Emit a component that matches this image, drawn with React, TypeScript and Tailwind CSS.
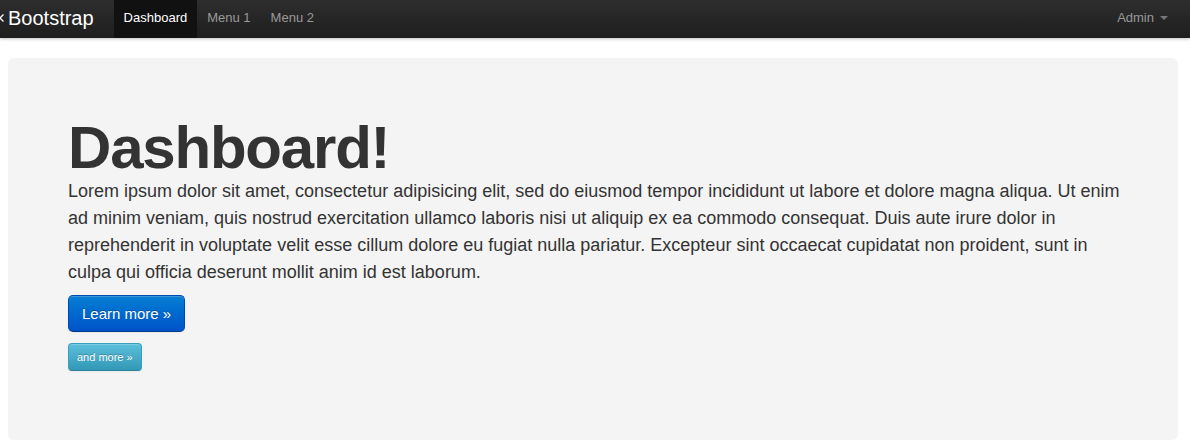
import React from "react";

export default function App() {
  const font = { fontFamily: '"Liberation Sans", Arial, Helvetica, sans-serif' };
  return (
    <div className="w-[1190px] h-[440px] bg-white overflow-hidden text-[#333]" style={font}>
      <div className="h-[38px] bg-gradient-to-b from-[#2e2e2e] to-[#1e1e1e] shadow-[0_1px_3px_rgba(0,0,0,0.25)] flex items-stretch relative z-10">
        <div className="w-[1178px] flex items-stretch pb-[3px]">
          <span className="w-[4px] overflow-hidden flex items-center">
            <svg width="4" height="10" viewBox="0 0 4 10" className="shrink-0">
              <path d="M0 5 L3.5 1.5 M0 5 L3.5 8.5" stroke="#fff" strokeWidth="1.3" fill="none" />
            </svg>
          </span>
          <a className="pl-[4px] pr-[20px] flex items-center text-[20px] text-white leading-none">Bootstrap</a>
          <div className="flex items-stretch text-[13px] -mb-[3px]">
            <a className="px-[10px] pb-[3px] flex items-center bg-[#111] text-white">Dashboard</a>
            <a className="px-[10px] pb-[3px] flex items-center text-[#999]">Menu 1</a>
            <a className="px-[10px] pb-[3px] flex items-center text-[#999]">Menu 2</a>
          </div>
          <div className="flex-1" />
          <a className="px-[10px] flex items-center text-[13px] text-[#999]">
            Admin
            <span className="ml-[6px] mt-[1px] w-0 h-0 border-l-[4px] border-r-[4px] border-t-[4px] border-l-transparent border-r-transparent border-t-[#777]" />
          </a>
        </div>
      </div>
      <div className="ml-[8px] mt-[20px] w-[1170px] rounded-[6px] bg-[#f4f4f4] p-[60px]">
        <h1 className="text-[60px] leading-none font-bold tracking-[-1.2px] text-[#333]">Dashboard!</h1>
        <p className="text-[18px] leading-[27px] mb-[9px] text-[#333] w-[1062px]">
          Lorem ipsum dolor sit amet, consectetur adipisicing elit, sed do eiusmod tempor incididunt ut labore et dolore magna aliqua. Ut enim ad minim veniam, quis nostrud exercitation ullamco laboris nisi ut aliquip ex ea commodo consequat. Duis aute irure dolor in reprehenderit in voluptate velit esse cillum dolore eu fugiat nulla pariatur. Excepteur sint occaecat cupidatat non proident, sunt in culpa qui officia deserunt mollit anim id est laborum.
        </p>
        <div className="mb-[11px] flex">
          <a className="inline-block px-[13px] py-[9px] text-[15px] leading-[17px] text-white rounded-[5px] border border-[#0049b0] border-b-[#003a8c] bg-gradient-to-b from-[#0a7fd4] to-[#0052c8] shadow-[inset_0_1px_0_rgba(255,255,255,0.2),0_1px_2px_rgba(0,0,0,0.05)] [text-shadow:0_-1px_0_rgba(0,0,0,0.25)]">
            Learn more »
          </a>
        </div>
        <div className="mb-[9px] flex">
          <a className="inline-block px-[8px] py-[5px] text-[11px] leading-[16px] text-white rounded-[4px] border border-[#3a9fbd] border-b-[#2b83a0] bg-gradient-to-b from-[#5cbfdc] to-[#3198b6] shadow-[inset_0_1px_0_rgba(255,255,255,0.2),0_1px_2px_rgba(0,0,0,0.05)] [text-shadow:0_-1px_0_rgba(0,0,0,0.25)]">
            and more »
          </a>
        </div>
      </div>
    </div>
  );
}
